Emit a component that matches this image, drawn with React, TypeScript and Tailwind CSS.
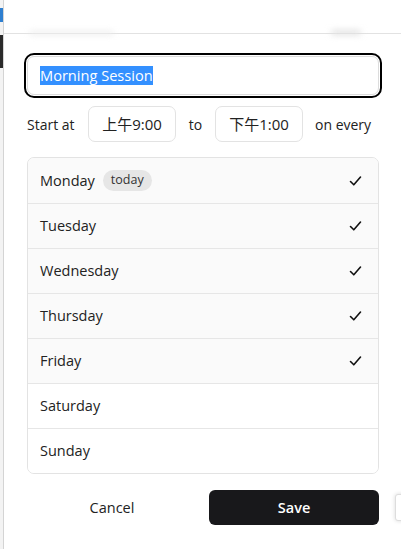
import React from "react";

const days = [
  { name: "Monday", today: true, on: true },
  { name: "Tuesday", on: true },
  { name: "Wednesday", on: true },
  { name: "Thursday", on: true },
  { name: "Friday", on: true },
  { name: "Saturday", on: false },
  { name: "Sunday", on: false },
];

function Check() {
  return (
    <svg width="13" height="12" viewBox="0 0 13 12" fill="none">
      <path d="M1.5 6.5 L4.8 9.8 L11.5 2" stroke="#111" strokeWidth="1.6" strokeLinecap="round" strokeLinejoin="round" />
    </svg>
  );
}

export default function App() {
  return (
    <div
      className="relative flex h-[549px] w-[401px] overflow-hidden bg-white text-[#222]"
      style={{ fontFamily: '"Open Sans", "Noto Sans CJK SC", sans-serif' }}
    >
      <div className="flex w-[3px] flex-col bg-[#f3f3f3]">
        <div className="mt-[8px] h-[14px] bg-[#2e7fd0]" />
        <div className="mt-[13px] h-[33px] bg-[#2a2a2a]" />
      </div>
      <div className="flex flex-1 flex-col border-l border-[#d4d4d4]">
        <div className="relative h-[34px] border-b border-[#e2e2e2]">
          <div className="absolute bottom-[-2px] left-[25px] h-[4px] w-[85px] rounded-full bg-[#ececec] blur-[3px]" />
          <div className="absolute bottom-[-2px] right-[40px] h-[5px] w-[30px] rounded-full bg-[#e0e0e0] blur-[3px]" />
        </div>
        <div className="flex flex-col pl-[23px] pr-[22px] pt-[22px]">
          <div className="flex h-[39px] items-center rounded-[7px] border border-[#dcdcdc] px-[12px] outline outline-2 outline-offset-1 outline-black">
            <span className="bg-[#3390ff] text-[14.6px] leading-[19px] text-white">Morning Session</span>
          </div>
          <div className="mt-[11px] flex items-center text-[14px]">
            <span className="w-[61px]">Start at</span>
            <div className="flex h-[36px] w-[88px] items-center justify-center rounded-[7px] border border-[#e3e3e3] text-[15px]">上午9:00</div>
            <span className="w-[39px] text-center">to</span>
            <div className="flex h-[36px] w-[88px] items-center justify-center rounded-[7px] border border-[#e3e3e3] text-[15px]">下午1:00</div>
            <span className="ml-[12px]">on every</span>
          </div>
          <div className="mt-[15px] overflow-hidden rounded-[7px] border border-[#e3e3e3]">
            {days.map((d, i) => (
              <div
                key={d.name}
                className={`flex h-[45px] items-center justify-between pl-[12px] pr-[16px] text-[14.5px] ${i > 0 ? "border-t border-[#e6e6e6]" : ""} ${d.on ? "bg-[#fafafa]" : "bg-white"}`}
              >
                <div className="flex items-center gap-[8px]">
                  <span>{d.name}</span>
                  {d.today && (
                    <span className="rounded-full bg-[#e6e6e6] px-[8px] py-[1px] text-[12.5px] text-[#333]">today</span>
                  )}
                </div>
                {d.on && <Check />}
              </div>
            ))}
          </div>
          <div className="mt-[16px] flex items-center">
            <div className="flex h-[35px] w-[170px] items-center justify-center text-[14.5px]">Cancel</div>
            <div className="ml-[12px] flex h-[35px] w-[170px] items-center justify-center rounded-[6px] bg-[#18181b] text-[14.5px] font-semibold text-white">Save</div>
          </div>
        </div>
      </div>
      <div className="absolute left-[395px] top-[494px] h-[27px] w-[12px] rounded-[3px] border border-[#ddd] bg-white shadow-[0_0_4px_rgba(0,0,0,0.15)]" />
    </div>
  );
}
